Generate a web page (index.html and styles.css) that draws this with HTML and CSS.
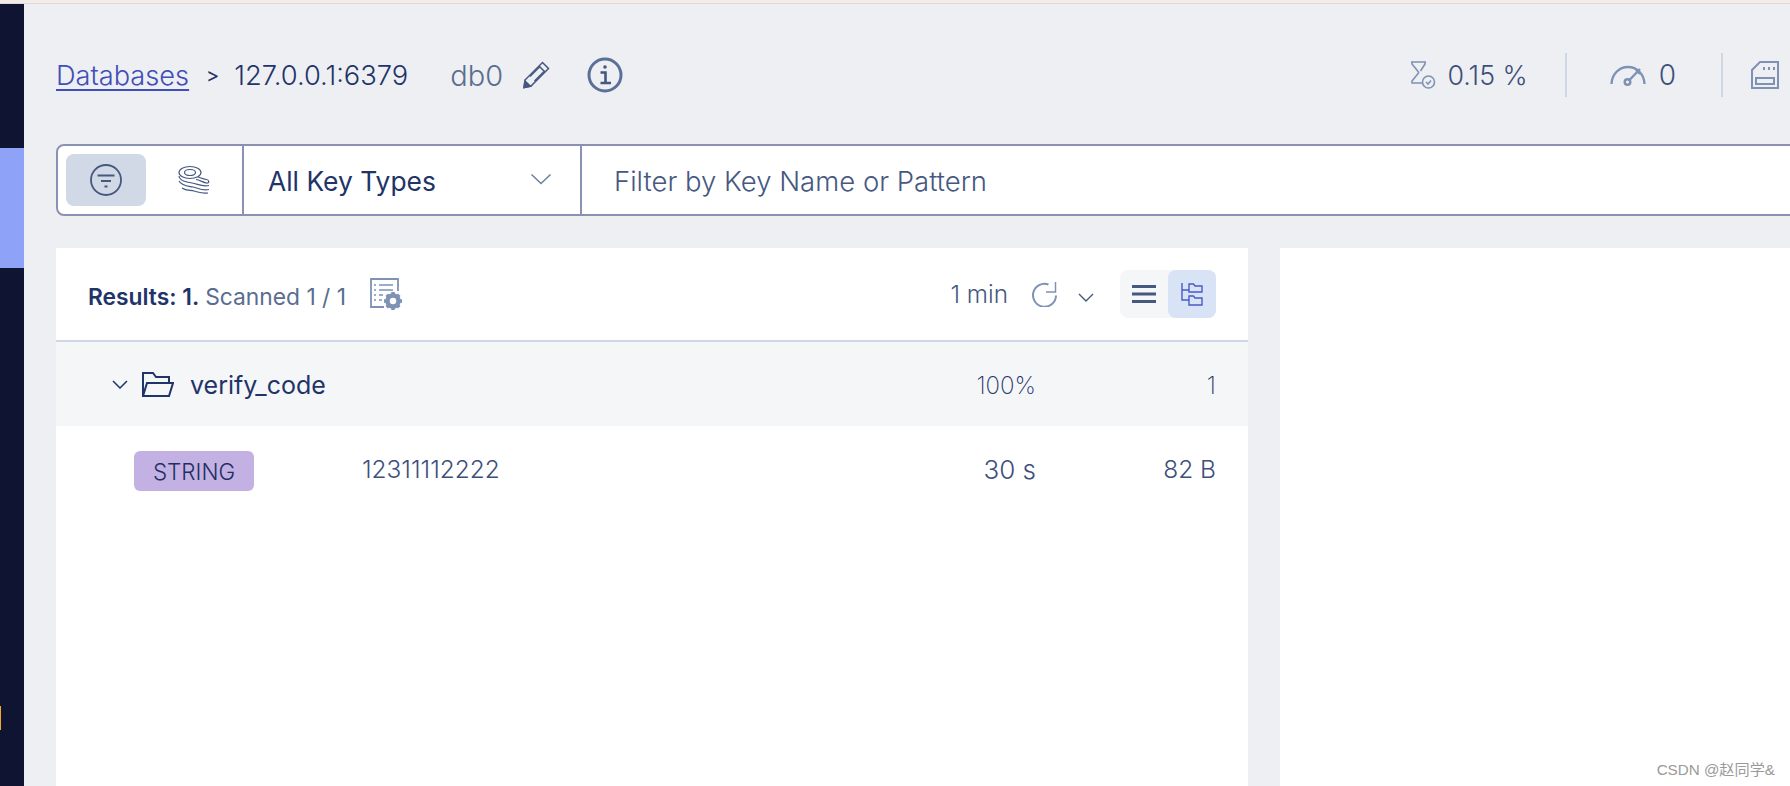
FILE: index.html
```html
<!DOCTYPE html>
<html lang="en">
<head>
<meta charset="utf-8">
<title>Browser</title>
<link rel="stylesheet" href="styles.css">
</head>
<body>
<div class="strip"></div>
<div class="app">
  <nav class="sidebar">
    <div class="side-active"></div>
    <div class="side-mark"></div>
  </nav>
  <main class="main">
    <header class="topbar">
      <a class="crumb-link" href="#">Databases</a>
      <span class="crumb-sep">&gt;</span>
      <span class="crumb-host">127.0.0.1:6379</span>
      <span class="crumb-db">db0</span>
      <svg class="ic-pencil" viewBox="0 0 28 28" fill="none" stroke="#46587f" stroke-width="1.500">
        <path d="M20.500 1.500 26.500 7.500 9 25 2 26.500 3 19Z"/>
        <path d="M17 5 23 11M8 15.500 18 5.500M12.500 20 22 10.500"/>
        <path d="M2 26.500 3 20 8.500 25.200Z" fill="#46587f"/>
      </svg>
      <svg class="ic-info" viewBox="0 0 36 36" fill="none" stroke="#5a7099" stroke-width="3">
        <circle cx="18" cy="18" r="16"/>
        <circle cx="18" cy="10" r="1.800" fill="#46587f" stroke="none"/>
        <path d="M13.500 15.500H18.500V25.500M13.500 26H24" stroke="#46587f" stroke-width="2.600"/>
      </svg>
      <div class="stats">
        <div class="stat">
          <svg class="ic-hour" viewBox="0 0 26 28" fill="none" stroke="#7e92b5" stroke-width="1.600">
            <path d="M1 1H16M2 1V3L8.500 11V12L2 20V22H12"/>
            <path d="M15 1V3L10.500 10"/>
            <circle cx="18.500" cy="21" r="6"/>
            <path d="M16 21 18 23 21 19.500"/>
          </svg>
          <span class="stat-val">0.15 %</span>
        </div>
        <div class="stat stat-ruled">
          <svg class="ic-gauge" viewBox="0 0 36 22" fill="none" stroke="#7e92b5" stroke-width="2.400">
            <path d="M1.500 20C2 10 9 3 18 3C27 3 34 10 34.500 20"/>
            <circle cx="17.500" cy="18" r="2.800"/>
            <path d="M19.500 16 30 5M26 6 30 10"/>
          </svg>
          <span class="stat-val stat-big">0</span>
        </div>
        <div class="stat stat-ruled">
          <svg class="ic-disk" viewBox="0 0 28 28" fill="none" stroke="#7e92b5" stroke-width="2">
            <path d="M9 1H27V27H1V9Z"/>
            <rect x="5" y="17" width="18" height="6"/>
            <path d="M13 6V9M18 6V9M23 6V9"/>
          </svg>
        </div>
      </div>
    </header>

    <section class="filter">
      <div class="mode">
        <button class="mode-btn mode-on" type="button">
          <svg class="ic-filter" viewBox="0 0 32 32" fill="none" stroke="#46587f" stroke-width="1.800">
            <circle cx="16" cy="16" r="15"/>
            <path d="M7.500 11.500H24.500M11 17H21" stroke-width="2"/>
            <path d="M14.500 22.500H17.500" stroke-width="2"/>
          </svg>
        </button>
        <button class="mode-btn" type="button">
          <svg class="ic-search" viewBox="0 0 32 30" fill="none" stroke="#46587f" stroke-width="1.200">
            <ellipse cx="12" cy="7.500" rx="11" ry="6"/>
            <ellipse cx="12" cy="7.500" rx="5.500" ry="3"/>
            <path d="M20 12C23 13 25 14 28.500 14.500C31.500 15 31.500 18.500 28.500 18C25 17.500 22 15 18 14.500"/>
            <path d="M1 11C2 16 8 17 14 18C20 19 24 22 31 20.500"/>
            <path d="M1 16C4 21 10 21 15 22C20 23 24 26 31 24.500"/>
            <path d="M4 23C8 26 12 25 16 26C20 27 24 29 30 28"/>
          </svg>
        </button>
      </div>
      <div class="type-select">
        <span>All Key Types</span>
        <svg class="ic-chev-lg" viewBox="0 0 22 12" fill="none" stroke="#6d7fa3" stroke-width="1.500"><path d="M1.500 1.500 11 10.500 20.500 1.500"/></svg>
      </div>
      <div class="search-text">Filter by Key Name or Pattern</div>
    </section>

    <div class="panels">
      <section class="panel">
        <div class="results">
          <span class="results-strong">Results: 1.</span>
          <span class="results-soft">Scanned 1 / 1</span>
          <svg class="ic-scan" viewBox="0 0 33 33" fill="none" stroke="#7e92b5" stroke-width="1.800">
            <path d="M14 29H1V1H28V13"/>
            <path d="M9 7H23M9 12H23M9 17H13M9 22H12" stroke-width="1.600"/>
            <path d="M4 7H6M4 12H6M4 17H6M4 22H6" stroke-width="1.600"/>
            <circle cx="23" cy="23" r="5.500" stroke-width="4.500"/>
            <path d="M23 14V17M23 29V32M14 23H17M29 23H32M16.700 16.700 18.800 18.800M27.200 27.200 29.300 29.300M16.700 29.300 18.800 27.200M27.200 18.800 29.300 16.700" stroke-width="3.500"/>
          </svg>
          <span class="refresh-time">1 min</span>
          <svg class="ic-refresh" viewBox="0 0 25 25" fill="none" stroke="#7e92b5" stroke-width="2">
            <path d="M16.500 2.500A11.500 11.500 0 1 0 24 13.500"/>
            <path d="M23.500 0V10H14" stroke-width="1.500"/>
          </svg>
          <svg class="ic-chev" viewBox="0 0 16 9" fill="none" stroke="#46587f" stroke-width="1.400"><path d="M1 1 8 8 15 1"/></svg>
          <div class="view-toggle">
            <button class="view-btn" type="button">
              <svg class="ic-menu" viewBox="0 0 24 18" fill="#46587f"><rect width="24" height="3"/><rect y="7.500" width="24" height="3"/><rect y="15" width="24" height="3"/></svg>
            </button>
            <button class="view-btn view-on" type="button">
              <svg class="ic-tree" viewBox="0 0 22 23" fill="none" stroke="#4a5ac8" stroke-width="1.400">
                <path d="M1 0V17H8M1 7H8"/>
                <path d="M8 3V9H21V3H14L12.500 1H8V3Z"/>
                <path d="M8 15V22H21V15H14L12.500 13H8V15Z"/>
              </svg>
            </button>
          </div>
        </div>
        <div class="row row-folder">
          <svg class="ic-chev ic-row-chev" viewBox="0 0 16 9" fill="none" stroke="#1f3468" stroke-width="1.500"><path d="M1 1 8 8 15 1"/></svg>
          <svg class="ic-folder" viewBox="0 0 32 26" fill="none" stroke="#1f3468" stroke-width="2">
            <path d="M1 25V2H11L14 6H27V12"/>
            <path d="M1 25H27L31 12H5L1 25Z"/>
          </svg>
          <span class="row-name">verify_code</span>
          <span class="cell cell-thin">100%</span>
          <span class="cell cell-size cell-thin">1</span>
        </div>
        <div class="row row-key">
          <span class="badge">STRING</span>
          <span class="row-name key-name">12311112222</span>
          <span class="cell">30 s</span>
          <span class="cell cell-size cell-bytes">82 B</span>
        </div>
      </section>
      <section class="panel"></section>
    </div>
  </main>
</div>
<div class="watermark">CSDN @赵同学&amp;</div>
</body>
</html>
```

FILE: styles.css
```css
* { box-sizing: border-box; }
html, body { height: 100%; margin: 0; }
body {
  display: flex;
  flex-direction: column;
  overflow: hidden;
  background: #eeeff3;
  color: #1f3468;
  font-family: Inter, "Noto Sans", sans-serif;
  font-size: 26.8px;
  font-weight: 300;
}
.strip { height: 4px; flex: none; background: #f5ece8; border-bottom: 1px solid #d9dade; }
.app { flex: 1; display: flex; min-height: 0; }

.sidebar { width: 24px; flex: none; background: #0f1433; padding-top: 144px; }
.side-active { height: 120px; background: #8ea3f8; }
.side-mark { width: 1px; height: 24px; margin-top: 438px; background: #f5a623; }

.main { flex: 1; min-width: 0; padding-left: 32px; display: flex; flex-direction: column; overflow: hidden; }

.topbar { height: 140px; flex: none; padding: 2px 11px 0 0; display: flex; align-items: center; }
.crumb-link { color: #3f4eb8; font-size: 27.2px; text-decoration: underline; text-underline-offset: 4px; text-decoration-thickness: 2px; }
.crumb-sep { margin-left: 17px; font-size: 20px; font-weight: 400; }
.crumb-host { margin-left: 15px; font-size: 27.3px; }
.crumb-db { margin-left: 42px; color: #5a6d90; font-size: 29px; }
.ic-pencil { width: 28px; height: 28px; margin-left: 19px; }
.ic-info { width: 36px; height: 36px; margin-left: 37px; }

.stats { margin-left: auto; display: flex; align-items: center; }
.stat { display: flex; align-items: center; height: 44px; }
.stat-ruled { border-left: 2px solid #cdd7e6; }
.stat-val { color: #3d4f7c; }
.stat-big { font-size: 28px; }
.ic-hour { width: 26px; height: 28px; margin-right: 11px; }
.ic-gauge { width: 36px; height: 22px; margin: 0 13px 0 43px; }
.ic-disk { width: 28px; height: 28px; margin-left: 28px; }
.stat:first-child { padding-right: 37px; }
.stat:nth-child(2) { padding-right: 45px; }

.filter {
  flex: none;
  width: calc(100% + 10px);
  height: 72px;
  display: flex;
  background: #fff;
  border: 2px solid #8a92b3;
  border-radius: 8px;
}
.mode { width: 186px; flex: none; padding: 8px; display: flex; border-right: 2px solid #8a92b3; }
.mode-btn { width: 80px; height: 52px; padding: 0; margin: 0; border: 0; border-radius: 8px; background: none; display: flex; align-items: center; justify-content: center; }
.mode-btn + .mode-btn { margin-left: 8px; }
.mode-on { background: #d0d9e5; }
.ic-filter { width: 32px; height: 32px; }
.ic-search { width: 32px; height: 30px; }
.type-select { width: 338px; flex: none; padding: 2px 28px 0 24px; display: flex; align-items: center; justify-content: space-between; border-right: 2px solid #8a92b3; font-size: 26.4px; font-weight: 400; }
.ic-chev-lg { width: 22px; height: 12px; margin-top: -4px; }
.search-text { padding: 2px 0 0 32px; display: flex; align-items: center; color: #46587f; font-size: 27.5px; }

.panels { flex: 1; min-height: 0; margin-top: 32px; display: grid; grid-template-columns: 1192px 1fr; gap: 32px; }
.panel { background: #fff; }

.results { height: 94px; padding: 0 32px; display: flex; align-items: center; border-bottom: 2px solid #cdd7e6; font-size: 22.8px; }
.results-strong { font-weight: 600; margin-top: 5px; }
.results-soft { margin-left: 6px; color: #5a6d90; margin-top: 5px; font-weight: 400; }
.ic-scan { width: 33px; height: 33px; margin-left: 24px; }
.refresh-time { margin-left: auto; color: #46587f; font-size: 24.3px; }
.ic-refresh { width: 25px; height: 25px; margin-left: 24px; }
.ic-chev { width: 16px; height: 9px; }
.results > .ic-chev { margin: 6px 26px 0 21px; }
.view-toggle { display: flex; background: #f4f6f8; border-radius: 8px; }
.view-btn { width: 48px; height: 48px; padding: 0; border: 0; border-radius: 8px; background: none; display: flex; align-items: center; justify-content: center; }
.view-on { background: #d8e3f6; }
.ic-menu { width: 24px; height: 18px; }
.ic-tree { width: 22px; height: 23px; }

.row { display: flex; align-items: center; padding-right: 32px; }
.row-folder { height: 84px; padding-left: 56px; background: #f5f6f8; }
.ic-row-chev { margin-right: 14px; }
.ic-folder { width: 32px; height: 26px; margin-right: 16px; }
.row-name { flex: 1; margin-top: 2px; font-size: 25px; font-weight: 400; }
.row-key { height: 90px; padding-left: 78px; }
.badge { width: 120px; height: 40px; display: flex; align-items: center; justify-content: center; border-radius: 6px; background: #c4b1e3; color: #1f2f63; font-size: 22.4px; font-weight: 300; }
.row-key .key-name { margin-left: 108px; color: #3d4f7c; font-weight: 300; margin-top: -4px; font-size: 24.4px; }
.cell { color: #3d4f7c; font-size: 26px; font-weight: 300; text-align: right; margin-top: -4px; }
.cell-size { width: 180px; }
.cell-bytes { font-size: 24.5px; }
.cell-thin { font-size: 24px; font-weight: 200; margin-top: 2px; color: #1f3468; }

.watermark { position: absolute; right: 15px; top: 757px; color: #9a9a9a; font-size: 15.2px; font-weight: 400; font-family: "Liberation Sans", "Noto Sans CJK SC", sans-serif; }
```
